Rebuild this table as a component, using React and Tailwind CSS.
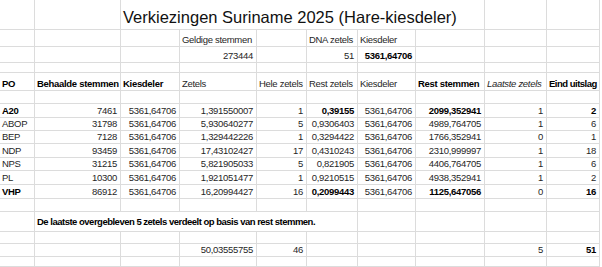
import React from "react";

const COLS = "grid grid-cols-[35px_86px_59px_77px_50px_51px_58px_69px_62px_53px]";
const LINE = "border-r border-b border-[#dcdcdc]";

function C({ children, r, b, i, span = "", cls = "" }) {
  return (
    <div
      className={`${LINE} ${span} flex items-end pb-[2px] whitespace-nowrap overflow-visible ${
        r ? "justify-end pr-[3px]" : "justify-start pl-[2px]"
      } ${b ? "font-bold text-black" : "text-[#262626]"} ${i ? "italic" : ""} ${cls}`}
    >
      {children}
    </div>
  );
}

const data = [
  ["A20", "7461", "1,391550007", "1", "0,39155", "2099,352941", "1", "2", true],
  ["ABOP", "31798", "5,930640277", "5", "0,9306403", "4989,764705", "1", "6", false],
  ["BEP", "7128", "1,329442226", "1", "0,3294422", "1766,352941", "0", "1", false],
  ["NDP", "93459", "17,43102427", "17", "0,4310243", "2310,999997", "1", "18", false],
  ["NPS", "31215", "5,821905033", "5", "0,821905", "4406,764705", "1", "6", false],
  ["PL", "10300", "1,921051477", "1", "0,9210515", "4938,352941", "1", "2", false],
  ["VHP", "86912", "16,20994427", "16", "0,2099443", "1125,647056", "0", "16", true],
];
const dataH = ["h-[14px]", "h-[13px]", "h-[13px]", "h-[14px]", "h-[13px]", "h-[14px]", "h-[14px]"];

function Empty({ n }) {
  return Array.from({ length: n }).map((_, k) => <C key={k} />);
}

export default function App() {
  return (
    <div className="w-[602px] h-[267px] overflow-hidden bg-white font-['Liberation_Sans',sans-serif] text-[9.5px] tracking-[-0.3px] leading-none">
      {/* title row */}
      <div className={`${COLS} h-[30px]`}>
        <C />
        <C />
        <C span="col-span-6" cls="pl-[1px] !pb-[4px] text-[16.5px] tracking-normal !text-[#111]">
          Verkiezingen Suriname 2025 (Hare-kiesdeler)
        </C>
        <C />
        <C />
      </div>
      <div className={`${COLS} h-[17px]`}>
        <C />
        <C />
        <C />
        <C>Geldige stemmen</C>
        <C />
        <C>DNA zetels</C>
        <C>Kiesdeler</C>
        <C />
        <C />
        <C />
      </div>
      <div className={`${COLS} h-[16px]`}>
        <C />
        <C />
        <C />
        <C r>273444</C>
        <C />
        <C r>51</C>
        <C r b>5361,64706</C>
        <C />
        <C />
        <C />
      </div>
      <div className={`${COLS} h-[10px]`}>
        <Empty n={10} />
      </div>
      <div className={`${COLS} h-[18px]`}>
        <C b>PO</C>
        <C b>Behaalde stemmen</C>
        <C b>Kiesdeler</C>
        <C>Zetels</C>
        <C>Hele zetels</C>
        <C>Rest zetels</C>
        <C>Kiesdeler</C>
        <C b>Rest stemmen</C>
        <C i>Laatste zetels</C>
        <C b cls="tracking-[-0.5px]">Eind uitslag</C>
      </div>
      <div className={`${COLS} h-[13px]`}>
        <Empty n={10} />
      </div>
      {data.map((d, k) => (
        <div key={d[0]} className={`${COLS} ${dataH[k]}`}>
          <C b={d[8]}>{d[0]}</C>
          <C r>{d[1]}</C>
          <C r>5361,64706</C>
          <C r>{d[2]}</C>
          <C r>{d[3]}</C>
          <C r b={d[8]}>{d[4]}</C>
          <C r>5361,64706</C>
          <C r b={d[8]}>{d[5]}</C>
          <C r>{d[6]}</C>
          <C r b={d[8]}>{d[7]}</C>
        </div>
      ))}
      <div className={`${COLS} h-[13px]`}>
        <Empty n={10} />
      </div>
      <div className={`${COLS} h-[20px]`}>
        <C />
        <C b span="col-span-5" cls="!pb-[5px] tracking-[-0.5px]">
          De laatste overgebleven 5 zetels verdeelt op basis van rest stemmen.
        </C>
        <C />
        <C />
        <C />
        <C />
      </div>
      <div className={`${COLS} h-[12px]`}>
        <Empty n={10} />
      </div>
      <div className={`${COLS} h-[13px]`}>
        <C />
        <C />
        <C />
        <C r>50,03555755</C>
        <C r>46</C>
        <C />
        <C />
        <C />
        <C r>5</C>
        <C r b>51</C>
      </div>
      <div className={`${COLS} h-[10px]`}>
        <Empty n={10} />
      </div>
    </div>
  );
}
